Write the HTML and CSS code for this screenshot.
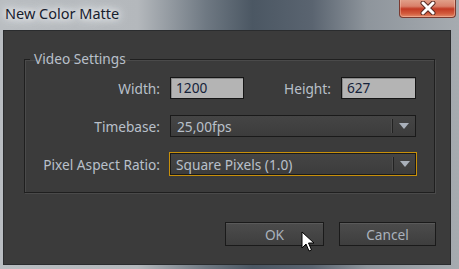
FILE: index.html
```html
<!DOCTYPE html>
<html>
<head>
<meta charset="utf-8">
<link rel="stylesheet" href="styles.css">
</head>
<body>
<div class="window">
  <div class="titlebar">
    <span class="title">New Color Matte</span>
    <div class="close">
      <svg width="22" height="14" viewBox="0 0 22 14">
        <path d="M6 2 L16 12 M16 2 L6 12" stroke="#5a2a22" stroke-width="5" stroke-linecap="round"/>
        <path d="M6 2 L16 12 M16 2 L6 12" stroke="#ffffff" stroke-width="3" stroke-linecap="round"/>
      </svg>
    </div>
  </div>
  <div class="panel">
    <fieldset class="group">
      <legend class="legend">Video Settings</legend>
      <div class="form">
        <span class="label">Width:</span>
        <div class="pair">
          <div class="field field-w">1200</div>
          <span class="label label-h">Height:</span>
          <div class="field field-h">627</div>
        </div>
        <span class="label">Timebase:</span>
        <div class="select">
          <span class="select-text">25,00fps</span>
          <span class="select-arrow"><svg width="10" height="6" viewBox="0 0 10 6"><path d="M0 0 H10 L5 6 Z" fill="#a9b0ba"/></svg></span>
        </div>
        <span class="label">Pixel Aspect Ratio:</span>
        <div class="select select-focus">
          <span class="select-text">Square Pixels (1.0)</span>
          <span class="select-arrow"><svg width="10" height="6" viewBox="0 0 10 6"><path d="M0 0 H10 L5 6 Z" fill="#a9b0ba"/></svg></span>
        </div>
      </div>
    </fieldset>
    <div class="buttons">
      <div class="btn btn-ok">OK</div>
      <div class="btn btn-cancel">Cancel</div>
    </div>
    <svg class="cursor" width="14" height="22" viewBox="0 0 14 22">
      <path d="M1 1 L1 17 L5 13 L8 20 L10.5 19 L7.5 12 L13 12 Z" fill="#ffffff" stroke="#000000" stroke-width="1" stroke-linejoin="round"/>
    </svg>
  </div>
</div>
</body>
</html>
```
FILE: styles.css
```css
html, body {
  margin: 0;
  padding: 0;
}
body {
  width: 459px;
  height: 269px;
  overflow: hidden;
  font-family: "Noto Sans", "DejaVu Sans", sans-serif;
}
.window {
  width: 459px;
  height: 269px;
  box-sizing: border-box;
  display: flex;
  flex-direction: column;
  padding: 0 8px 4px 3px;
  background: linear-gradient(90deg, #b9bdc1 0%, #b4b8bc 30%, #6e7882 45%, #4b5763 55%, #5a6470 68%, #8e959c 80%, #a6abb0 100%);
}
.titlebar {
  height: 30px;
  flex: none;
  display: flex;
  align-items: flex-start;
  justify-content: space-between;
}
.title {
  margin-left: 2px;
  margin-top: 3px;
  font-size: 14.5px;
  color: #17202e;
  text-shadow: 0 0 6px #ffffff, 0 0 10px #e8ecef, 0 0 14px #e8ecef;
}
.close {
  width: 57px;
  height: 19px;
  margin-right: -5px;
  margin-top: -1px;
  box-sizing: border-box;
  border: 1px solid #7a3a30;
  border-top: none;
  border-radius: 0 0 4px 4px;
  background: linear-gradient(180deg, #e2a48e 0%, #d9806a 40%, #c23a24 55%, #d25a3c 80%, #e28a6a 100%);
  display: flex;
  align-items: center;
  justify-content: center;
  box-shadow: inset 0 0 0 1px rgba(255,210,190,0.4);
}
.panel {
  flex: 1;
  position: relative;
  background: #3b3b3b;
  border: 1px solid #2a2c2e;
  box-sizing: border-box;
  display: flex;
  flex-direction: column;
}
.group {
  margin: 20px 15px 0 20px;
  padding: 0 0 17px 0;
  border: 1px solid #1f1f1f;
  box-shadow: 1px 1px 0 #4a4a4a, inset 1px 1px 0 #4a4a4a;
  min-width: 0;
}
.legend {
  margin-left: 5px;
  padding: 0 4px;
  font-size: 13.7px;
  line-height: 16px;
  color: #b9c0ca;
}
.form {
  margin-top: 10px;
  display: grid;
  grid-template-columns: 135px 246px;
  column-gap: 10px;
  row-gap: 16px;
  align-items: center;
}
.label {
  text-align: right;
  font-size: 13.7px;
  color: #b9c0ca;
  white-space: nowrap;
}
.pair {
  display: flex;
  align-items: center;
}
.label-h {
  margin-left: 40px;
  margin-right: 10px;
}
.field {
  height: 22px;
  box-sizing: border-box;
  border: 1px solid #151515;
  background: #b4b4b4;
  box-shadow: inset 1px 1px 0 #8a8a8a;
  color: #15223a;
  font-size: 13.7px;
  line-height: 20px;
  padding-left: 5px;
}
.field-w { width: 75px; }
.field-h { width: 76px; }
.select {
  height: 22px;
  box-sizing: border-box;
  border: 1px solid #1a1a1a;
  background: linear-gradient(180deg, #454545, #3c3c3c);
  display: flex;
  align-items: center;
  color: #b9c0ca;
  font-size: 13.7px;
}
.select-focus {
  height: 24px;
  margin: -1px -1px;
  border: 1px solid #c8900a;
  box-shadow: inset 0 0 0 1px #1a1a1a;
}
.select-text {
  flex: 1;
  padding-left: 6px;
}
.select-arrow {
  width: 22px;
  height: 14px;
  border-left: 1px solid #222;
  box-shadow: -1px 0 0 #4e4e4e;
  display: flex;
  align-items: center;
  justify-content: center;
}
.buttons {
  display: flex;
  justify-content: flex-end;
  gap: 15px;
  margin: 29px 14px 0 0;
}
.btn {
  height: 24px;
  box-sizing: border-box;
  border: 1px solid #1a1a1a;
  background: linear-gradient(180deg, #4c4c4c, #3e3e3e);
  box-shadow: inset 0 1px 0 #5a5a5a;
  color: #aab2bc;
  font-size: 13.7px;
  display: flex;
  align-items: center;
  justify-content: center;
}
.btn-ok { width: 99px; }
.btn-cancel { width: 97px; }
.cursor {
  position: absolute;
  left: 297px;
  top: 200px;
}
```
